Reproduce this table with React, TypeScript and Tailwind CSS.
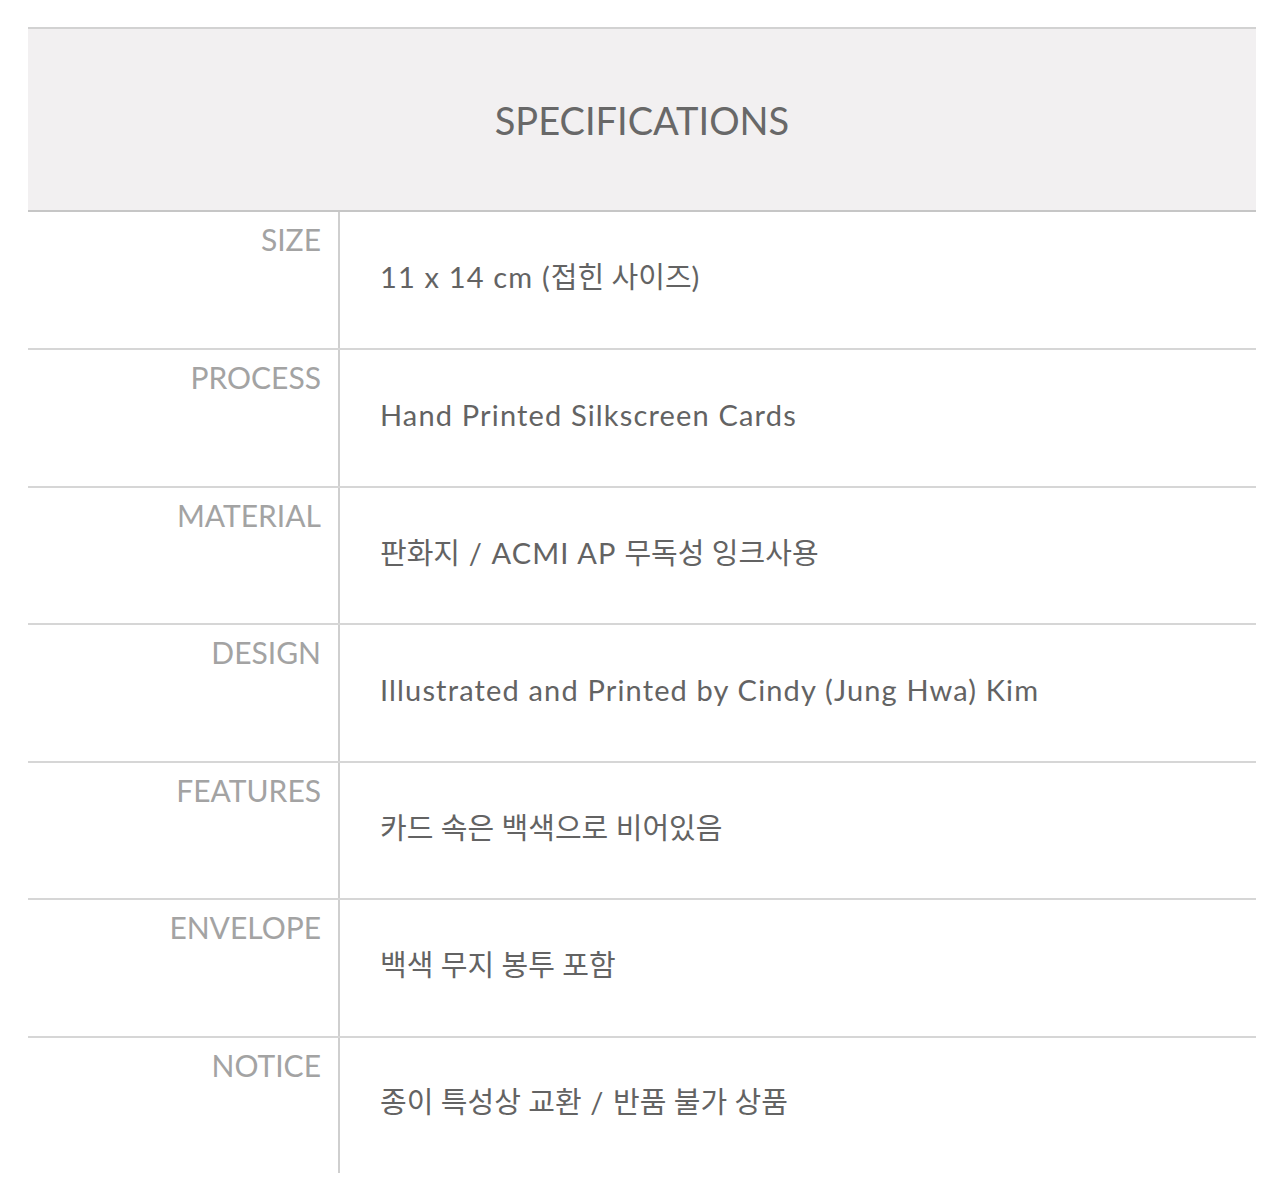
import React from "react"

const specs = [
  { label: "SIZE", value: "11 x 14 cm (접힌 사이즈)" },
  { label: "PROCESS", value: "Hand Printed Silkscreen Cards" },
  { label: "MATERIAL", value: "판화지 / ACMI AP 무독성 잉크사용" },
  { label: "DESIGN", value: "Illustrated and Printed by Cindy (Jung Hwa) Kim" },
  { label: "FEATURES", value: "카드 속은 백색으로 비어있음" },
  { label: "ENVELOPE", value: "백색 무지 봉투 포함" },
  { label: "NOTICE", value: "종이 특성상 교환 / 반품 불가 상품" },
]

// korean runs get normal tracking, latin runs a bit wider (like futura)
function SpecValue({ text }: { text: string }) {
  const parts = text.split(/([가-힣]+(?: [가-힣]+)*)/).filter(Boolean)
  return (
    <>
      {parts.map((p, i) =>
        /[가-힣]/.test(p) ? (
          <span key={i} className="tracking-normal">
            {p}
          </span>
        ) : (
          <span key={i} className="tracking-[0.04em]">
            {p}
          </span>
        ),
      )}
    </>
  )
}

export default function App() {
  return (
    <div
      className="min-h-[1200px] bg-white pt-[27px]"
      style={{ fontFamily: '"Lato", "Noto Sans CJK KR", sans-serif' }}
    >
      <div className="ml-[28px] w-[1228px]">
        {/* Header */}
        <div className="flex h-[185px] items-center justify-center border-t-2 border-b-2 border-t-[#d2d2d2] border-b-[#c6c6c6] bg-[#f2f0f1]">
          <h2 className="pt-[2px] text-[38px] text-[#686868]">SPECIFICATIONS</h2>
        </div>

        {/* Rows */}
        {specs.map((spec, i) => (
          <div
            key={spec.label}
            className={
              i === 0
                ? "grid h-[136px] grid-cols-[312px_1fr]"
                : i === specs.length - 1
                  ? "grid h-[137px] grid-cols-[312px_1fr] border-t-2 border-[#d6d6d6]"
                  : "grid h-[137.5px] grid-cols-[312px_1fr] border-t-2 border-[#d6d6d6]"
            }
          >
            <div className="border-r-2 border-[#cfcfcf] pr-[17px] pt-[9px] text-right text-[30px] leading-[1.2] text-[#a3a3a3]">
              {spec.label}
            </div>
            <div className="flex items-center pb-[6px] pl-[40px] text-[29px] text-[#636363]">
              <div>
                <SpecValue text={spec.value} />
              </div>
            </div>
          </div>
        ))}
      </div>
    </div>
  )
}
